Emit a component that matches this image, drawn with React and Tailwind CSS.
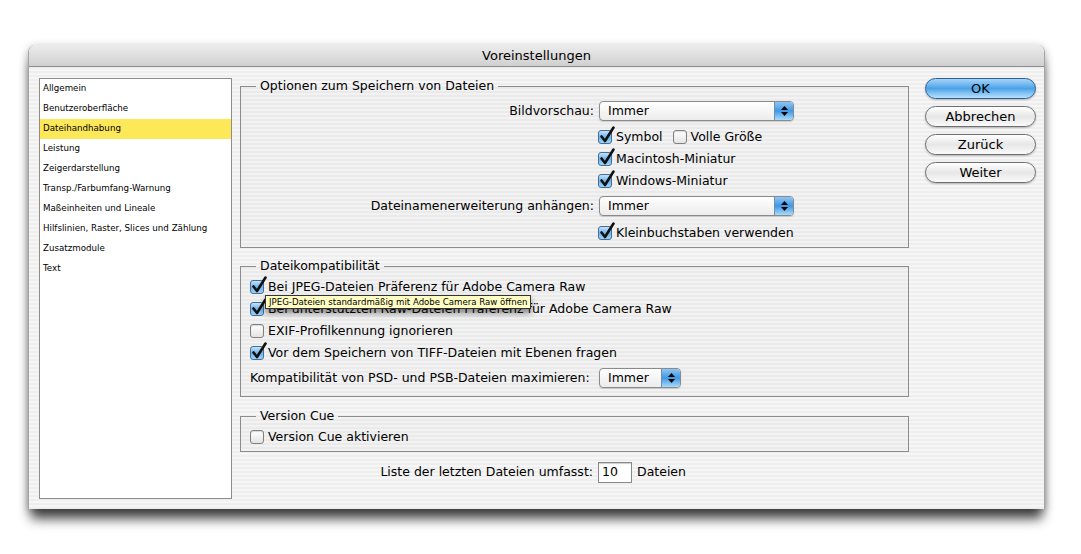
import React from "react";

const font = { fontFamily: '"DejaVu Sans", "Noto Sans", sans-serif' };

function Check({ checked }) {
  if (!checked) {
    return (
      <span className="relative inline-block w-[14px] h-[14px] shrink-0 rounded-[3px] border border-[#808080] bg-gradient-to-b from-[#ffffff] to-[#e4e4e4] shadow-[inset_0_1px_1px_rgba(0,0,0,0.15)]" />
    );
  }
  return (
    <span className="relative inline-block w-[14px] h-[14px] shrink-0 rounded-[3px] border border-[#3f6f9c] bg-gradient-to-b from-[#c4e2f8] via-[#6fb3ea] to-[#9fd2f6]">
      <svg className="absolute left-[0px] top-[-5px] w-[16px] h-[18px] overflow-visible" viewBox="0 0 16 18">
        <path d="M2.5 10.5 L6 15 L14.5 1.5" fill="none" stroke="#111" strokeWidth="2.6" strokeLinecap="round" strokeLinejoin="round" />
      </svg>
    </span>
  );
}

function Popup({ width, value }) {
  return (
    <div
      className="flex h-[20px] items-stretch rounded-[4px] border border-[#8a8a8a] bg-gradient-to-b from-[#ffffff] to-[#ececec] shadow-[0_1px_1px_rgba(0,0,0,0.15)] overflow-hidden"
      style={{ width }}
    >
      <span className="flex-1 pl-[8px] text-[12.5px] leading-[18px] text-black">{value}</span>
      <span className="flex w-[19px] flex-col items-center justify-center gap-[2px] border-l border-[#6d8fb3] bg-gradient-to-b from-[#8cc6f3] via-[#3e97e4] to-[#a8dbfa]">
        <svg width="7" height="4" viewBox="0 0 7 4"><path d="M3.5 0 L7 4 L0 4 Z" fill="#000" /></svg>
        <svg width="7" height="4" viewBox="0 0 7 4"><path d="M0 0 L7 0 L3.5 4 Z" fill="#000" /></svg>
      </span>
    </div>
  );
}

function Button({ children, primary }) {
  return (
    <div
      className={
        "flex h-[21px] items-center justify-center rounded-full border text-[13px] leading-none text-black shadow-[0_1px_2px_rgba(0,0,0,0.25)] " +
        (primary
          ? "border-[#2d5f94] bg-gradient-to-b from-[#a6d4f8] via-[#4aa2e8] to-[#b6e2fc]"
          : "border-[#6e6e6e] bg-gradient-to-b from-[#ffffff] via-[#e7e7e7] to-[#fafafa]")
      }
    >
      {children}
    </div>
  );
}

function CheckRow({ checked, children, className = "" }) {
  return (
    <div className={"flex h-[22px] items-center gap-[4px] " + className}>
      <Check checked={checked} />
      <span className="text-[12.5px] leading-none text-black whitespace-nowrap">{children}</span>
    </div>
  );
}

const items = [
  "Allgemein",
  "Benutzeroberfläche",
  "Dateihandhabung",
  "Leistung",
  "Zeigerdarstellung",
  "Transp./Farbumfang-Warnung",
  "Maßeinheiten und Lineale",
  "Hilfslinien, Raster, Slices und Zählung",
  "Zusatzmodule",
  "Text",
];

const stripes =
  "bg-[repeating-linear-gradient(180deg,#eeeeee_0px,#eeeeee_2px,#f6f6f6_2px,#f6f6f6_4px)]";

export default function App() {
  return (
    <div className="h-[554px] w-[1081px] bg-white pl-[28px] pt-[45px]" style={font}>
      <div className="flex h-[464px] w-[1017px] flex-col rounded-t-[7px] border-x border-[#a4a4a4] shadow-[0_13px_12px_-3px_rgba(0,0,0,0.7),0_2px_8px_rgba(0,0,0,0.3)]">
        {/* title bar */}
        <div className="flex h-[22px] shrink-0 items-center justify-center rounded-t-[7px] border-b border-[#8c8c8c] bg-gradient-to-b from-[#ececec] to-[#d0d0d0] text-[13px] text-black">
          Voreinstellungen
        </div>
        {/* body */}
        <div className={"flex flex-1 pt-[11px] pb-[10px] " + stripes}>
          {/* list */}
          <div className="ml-[10px] w-[193px] shrink-0 border border-[#8e8e86] bg-white">
            {items.map((it, i) => (
              <div
                key={it}
                className={
                  "flex h-[20px] items-center pl-[3px] text-[8.7px] text-black " +
                  (i === 2 ? "bg-[#fde85a]" : "")
                }
              >
                {it}
              </div>
            ))}
          </div>

          {/* main */}
          <div className="ml-[8px] flex w-[669px] shrink-0 flex-col">
            <fieldset className="border border-[#8c8c8c] bg-black/[0.015]">
              <legend className="ml-[15px] px-[4px] text-[12.5px] leading-[16px] text-black">
                Optionen zum Speichern von Dateien
              </legend>
              <div className="flex flex-col pt-[4px] pb-[1px]">
                <div className="flex h-[26px] items-center">
                  <span className="w-[353px] text-right text-[12.5px] text-black">Bildvorschau:</span>
                  <span className="ml-[5px]"><Popup width={195} value="Immer" /></span>
                </div>
                <div className="h-[2px]" />
                <div className="flex h-[22px] items-center pl-[357px]">
                  <CheckRow checked>Symbol</CheckRow>
                  <CheckRow className="ml-[10px]">Volle Größe</CheckRow>
                </div>
                <div className="pl-[357px]"><CheckRow checked>Macintosh-Miniatur</CheckRow></div>
                <div className="pl-[357px]"><CheckRow checked>Windows-Miniatur</CheckRow></div>
                <div className="flex h-[28px] items-center">
                  <span className="w-[353px] text-right text-[12.5px] text-black">Dateinamenerweiterung anhängen:</span>
                  <span className="ml-[5px]"><Popup width={195} value="Immer" /></span>
                </div>
                <div className="flex h-[26px] items-center pl-[357px]">
                  <CheckRow checked>Kleinbuchstaben verwenden</CheckRow>
                </div>
              </div>
            </fieldset>

            <fieldset className="mt-[10px] border border-[#8c8c8c] bg-black/[0.015]">
              <legend className="ml-[15px] px-[4px] text-[12.5px] leading-[16px] text-black">
                Dateikompatibilität
              </legend>
              <div className="relative flex flex-col pl-[9px] pt-[2px] pb-[4px]">
                <CheckRow checked>Bei JPEG-Dateien Präferenz für Adobe Camera Raw</CheckRow>
                <CheckRow checked>Bei unterstützten Raw-Dateien Präferenz für Adobe Camera Raw</CheckRow>
                <CheckRow>EXIF-Profilkennung ignorieren</CheckRow>
                <CheckRow checked>Vor dem Speichern von TIFF-Dateien mit Ebenen fragen</CheckRow>
                <div className="flex h-[28px] items-center">
                  <span className="w-[344px] text-[12.5px] text-black whitespace-nowrap">
                    Kompatibilität von PSD- und PSB-Dateien maximieren:
                  </span>
                  <span className="ml-[5px]"><Popup width={82} value="Immer" /></span>
                </div>
                <div className="absolute left-[24px] top-[21px] z-10 flex h-[14px] items-center border border-[#333] bg-[#ffffc4] px-[3px] text-[8.6px] leading-none text-black whitespace-nowrap shadow-[0_4px_6px_rgba(0,0,0,0.45)]">
                  JPEG-Dateien standardmäßig mit Adobe Camera Raw öffnen
                </div>
              </div>
            </fieldset>

            <fieldset className="mt-[11px] border border-[#8c8c8c] bg-black/[0.015]">
              <legend className="ml-[15px] px-[4px] text-[12.5px] leading-[16px] text-black">
                Version Cue
              </legend>
              <div className="flex flex-col pl-[9px] pt-[2px] pb-[3px]">
                <CheckRow>Version Cue aktivieren</CheckRow>
              </div>
            </fieldset>

            <div className="mt-[8px] flex h-[24px] items-center">
              <span className="w-[353px] text-right text-[12.5px] text-black">Liste der letzten Dateien umfasst:</span>
              <span className="ml-[5px] flex h-[21px] w-[34px] items-center border border-[#8a8a8a] bg-white pl-[3px] text-[12.5px] text-black shadow-[inset_0_1px_1px_rgba(0,0,0,0.2)]">
                10
              </span>
              <span className="ml-[5px] text-[12.5px] text-black">Dateien</span>
            </div>
          </div>

          {/* buttons */}
          <div className="ml-[16px] flex w-[111px] shrink-0 flex-col gap-[7px]">
            <Button primary>OK</Button>
            <Button>Abbrechen</Button>
            <Button>Zurück</Button>
            <Button>Weiter</Button>
          </div>
        </div>
      </div>
    </div>
  );
}
